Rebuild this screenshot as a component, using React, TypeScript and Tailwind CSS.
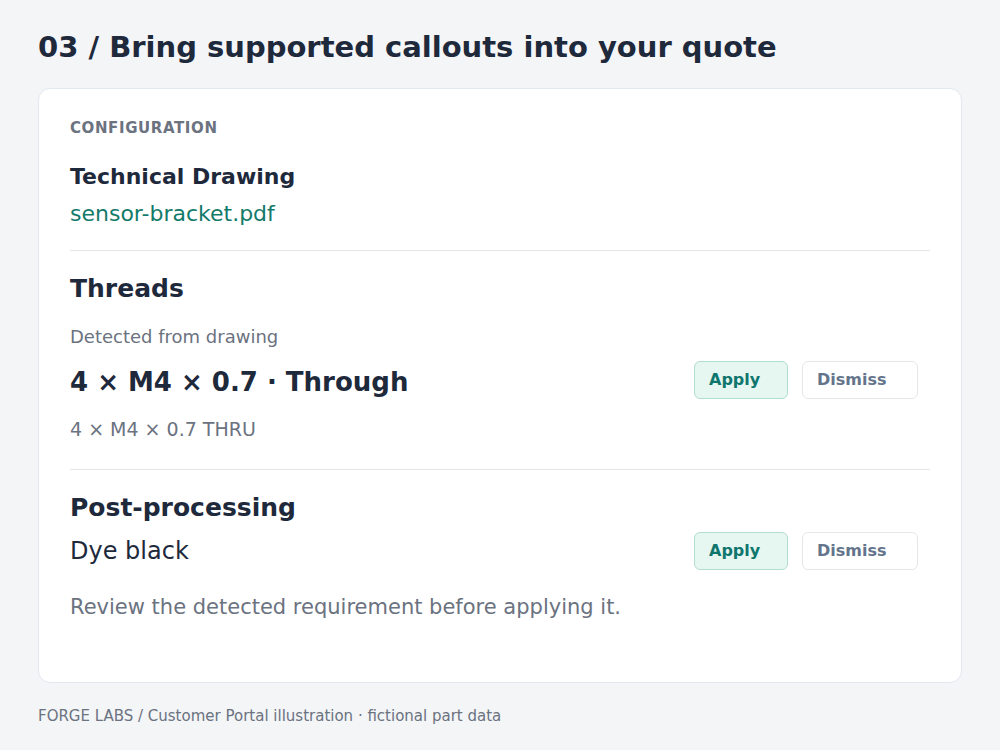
import React from 'react';

const ActionButtons: React.FC = () => (
  <div className="flex items-center gap-[14px] pr-3">
    <button className="h-[38px] w-[94px] rounded-md border border-[#b2ddd2] bg-[#e6f6f1] pl-[14px] text-left text-[16px] font-bold text-[#0f766e]">
      Apply
    </button>
    <button className="h-[38px] w-[116px] rounded-md border border-[#e5e7eb] bg-white pl-[14px] text-left text-[16px] font-bold text-[#64748b]">
      Dismiss
    </button>
  </div>
);

const App: React.FC = () => {
  return (
    <div
      className="min-h-[750px] w-[1000px] bg-[#f3f5f7] px-[38px] pt-[29px]"
      style={{ fontFamily: '"DejaVu Sans", "Liberation Sans", sans-serif' }}
    >
      <h1 className="text-[29px] font-bold leading-[36px] text-[#1e293b]">
        03 / Bring supported callouts into your quote
      </h1>

      <div className="mt-[23px] rounded-xl border border-[#e2e8f0] bg-white px-[31px] pt-[29px] pb-[61px]">
        {/* Configuration */}
        <div className="border-b border-[#e5e7eb] pb-[22px]">
          <div className="text-[15px] font-bold uppercase leading-[20px] tracking-[0.04em] text-[#6b7280]">
            Configuration
          </div>
          <div className="mt-[25px] text-[22px] font-bold leading-[28px] text-[#1e293b]">Technical Drawing</div>
          <div className="mt-[9px] text-[22px] leading-[28px] text-[#137a6a]">sensor-bracket.pdf</div>
        </div>

        {/* Threads */}
        <div className="border-b border-[#e5e7eb] pt-[22px] pb-[27px]">
          <h2 className="text-[25px] font-bold leading-[32px] text-[#1e293b]">Threads</h2>
          <div className="mt-[20px] text-[18px] leading-[24px] text-[#6b7280]">Detected from drawing</div>
          <div className="mt-[12px] flex items-center justify-between">
            <div className="pt-[3px] text-[26px] font-bold leading-[34px] text-[#1e293b]">4 × M4 × 0.7 · Through</div>
            <ActionButtons />
          </div>
          <div className="mt-[17px] text-[19px] leading-[26px] text-[#6b7280]">4 × M4 × 0.7 THRU</div>
        </div>

        {/* Post-processing */}
        <div className="pt-[22px]">
          <h2 className="text-[25px] font-bold leading-[32px] text-[#1e293b]">Post-processing</h2>
          <div className="mt-[8px] flex items-center justify-between">
            <div className="text-[24px] leading-[30px] text-[#1e293b]">Dye black</div>
            <ActionButtons />
          </div>
          <div className="mt-[23px] text-[21px] leading-[28px] text-[#6b7280]">
            Review the detected requirement before applying it.
          </div>
        </div>
      </div>

      <div className="mt-[23px] text-[15px] leading-[20px] text-[#6b7280]">
        FORGE LABS / Customer Portal illustration · fictional part data
      </div>
    </div>
  );
};

export default App;
